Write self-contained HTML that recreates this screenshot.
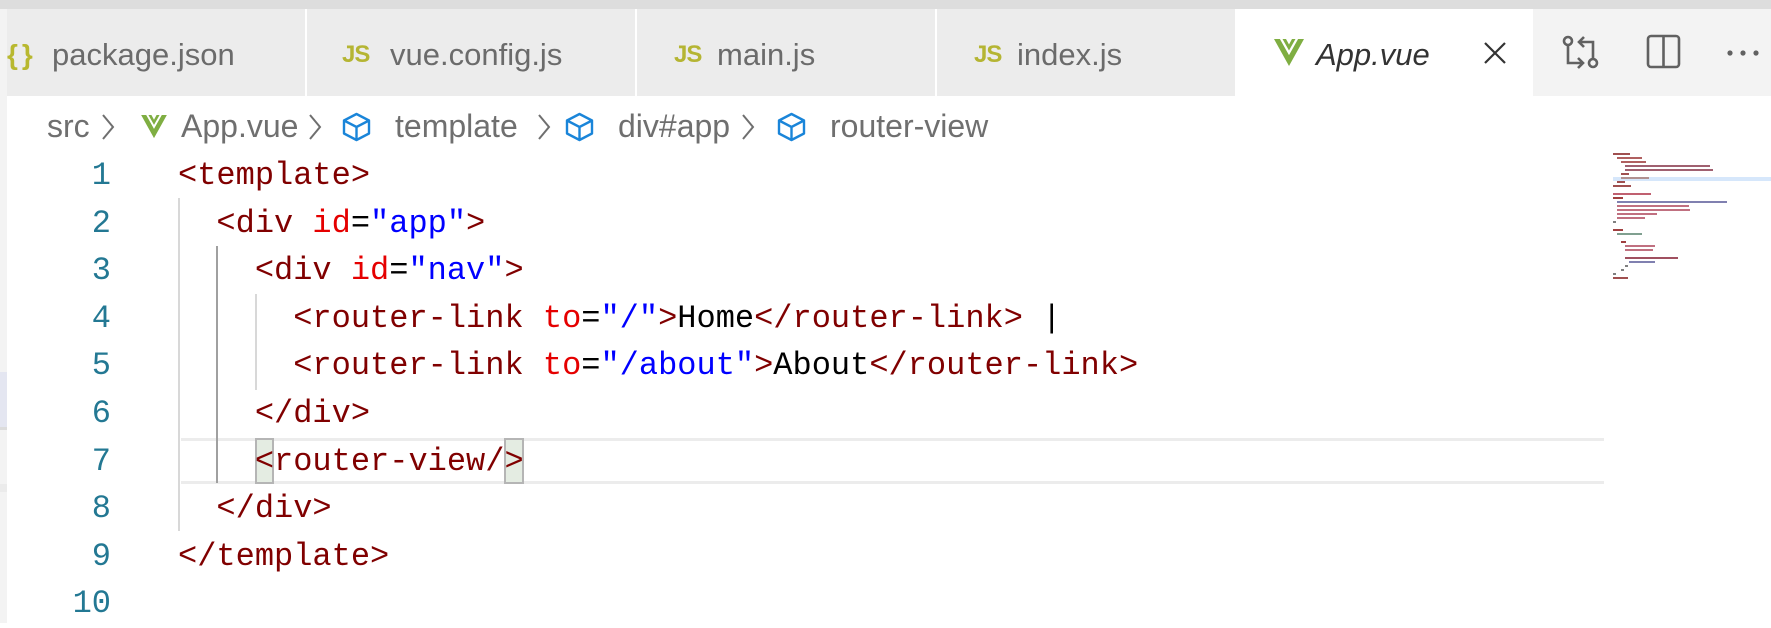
<!DOCTYPE html>
<html><head><meta charset="utf-8"><style>
*{margin:0;padding:0;box-sizing:border-box}
body{width:1771px;height:623px;overflow:hidden;background:#fff;position:relative;font-family:"Liberation Sans",sans-serif}
.abs{position:absolute}
.top{left:0;top:0;width:1771px;height:9px;background:#dddddd}
.tab{position:absolute;top:9px;height:87px;background:#ececec;color:#6b6b6b;font-size:31px;line-height:91px;white-space:nowrap}
.js{position:absolute;top:0;font-weight:bold;color:#b5b533;font-size:24px;letter-spacing:-1px}
.bc{position:absolute;top:96px;left:0;height:60px;width:1771px;font-size:32px;color:#6f6f6f;line-height:60px}
.bc span{position:absolute;top:0}
.ln{position:absolute;width:111px;text-align:right;color:#237893;font-family:"Liberation Mono",monospace;font-size:32px;line-height:47.6px}
.cl{position:absolute;left:178px;line-height:47.6px;font-family:"Liberation Mono",monospace;font-size:32px;white-space:pre;color:#000}
.t{color:#800000}.a{color:#e50000}.v{color:#0000ff}
.g{position:absolute;width:2px;background:#d8d8d8}
.mm div{position:absolute;height:2px}
</style></head><body>
<div class="abs top"></div>
<div class="abs" style="left:0;top:9px;width:7px;height:614px;background:#f3f3f3"></div>
<div class="abs" style="left:0;top:372px;width:7px;height:55px;background:#e4e6f1"></div>
<div class="abs" style="left:0;top:427px;width:7px;height:3px;background:#dcdcdc"></div>
<div class="abs" style="left:0;top:484px;width:7px;height:8px;background:#ebebeb"></div>

<div class="tab" style="left:7px;width:298px"><span style="position:absolute;left:0px;color:#b8b82f;font-weight:bold;font-size:28px;letter-spacing:4px">{}</span><span style="position:absolute;left:45px">package.json</span></div>
<div class="tab" style="left:307px;width:328px"><span class="js" style="left:35px">JS</span><span style="position:absolute;left:83px">vue.config.js</span></div>
<div class="tab" style="left:637px;width:298px"><span class="js" style="left:37px">JS</span><span style="position:absolute;left:80px">main.js</span></div>
<div class="tab" style="left:937px;width:298px"><span class="js" style="left:37px">JS</span><span style="position:absolute;left:80px">index.js</span></div>
<div class="tab" style="left:1237px;width:296px;background:#fff;color:#333"><svg style="position:absolute;left:37px;top:30px" width="30" height="28" viewBox="0 0 30 28"><path d="M0 0h6l9 16 9-16h6L15 27z" fill="#7fae42"/><path d="M6 0h5l4 7 4-7h5l-9 16z" fill="#fff"/><path d="M8.5 0h3.5l3 5.5 3-5.5h3.5l-6.5 11.5z" fill="#7fae42"/></svg><span style="position:absolute;left:79px;font-style:italic">App.vue</span><svg style="position:absolute;left:247px;top:33px" width="22" height="22" viewBox="0 0 22 22"><path d="M1 1L21 21M21 1L1 21" stroke="#333" stroke-width="2.2"/></svg></div>
<div class="abs" style="left:1533px;top:9px;width:238px;height:87px;background:#f3f3f3"></div>
<svg class="abs" style="left:1562px;top:34px" width="38" height="36" viewBox="0 0 38 36"><g fill="none" stroke="#616161" stroke-width="2.6"><circle cx="6" cy="7" r="4"/><circle cx="31" cy="29" r="4"/><path d="M6 11v18h14M16 24l5 5-5 5"/><path d="M31 25V8H17M22 3l-5 5 5 5"/></g></svg>
<svg class="abs" style="left:1646px;top:34px" width="35" height="35" viewBox="0 0 35 35"><rect x="2" y="2" width="31" height="31" rx="3" fill="none" stroke="#616161" stroke-width="2.6"/><path d="M17.5 2v31" stroke="#616161" stroke-width="2.6"/></svg>
<svg class="abs" style="left:1726px;top:48px" width="34" height="10"><circle cx="4" cy="5" r="2.6" fill="#616161"/><circle cx="17" cy="5" r="2.6" fill="#616161"/><circle cx="30" cy="5" r="2.6" fill="#616161"/></svg>

<div class="bc">
<span style="left:47px">src</span>
<svg style="position:absolute;left:101px;top:17px" width="14" height="28" viewBox="0 0 14 28"><path d="M2 2l10 12L2 26" fill="none" stroke="#6f6f6f" stroke-width="2"/></svg>
<svg style="position:absolute;left:141px;top:19px" width="26" height="24" viewBox="0 0 30 28"><path d="M0 0h6l9 16 9-16h6L15 27z" fill="#7fae42"/><path d="M6 0h5l4 7 4-7h5l-9 16z" fill="#fff"/><path d="M8.5 0h3.5l3 5.5 3-5.5h3.5l-6.5 11.5z" fill="#7fae42"/></svg>
<span style="left:181px">App.vue</span>
<svg style="position:absolute;left:308px;top:17px" width="14" height="28" viewBox="0 0 14 28"><path d="M2 2l10 12L2 26" fill="none" stroke="#6f6f6f" stroke-width="2"/></svg>
<svg style="position:absolute;left:341px;top:16px" width="31" height="30" viewBox="0 0 31 30"><g fill="none" stroke="#1a85d9" stroke-width="2.4" stroke-linejoin="round"><path d="M15.5 2L28 8.5v13L15.5 28 3 21.5v-13z"/><path d="M3 8.5l12.5 6.5L28 8.5M15.5 15v13"/></g></svg>
<span style="left:395px">template</span>
<svg style="position:absolute;left:537px;top:17px" width="14" height="28" viewBox="0 0 14 28"><path d="M2 2l10 12L2 26" fill="none" stroke="#6f6f6f" stroke-width="2"/></svg>
<svg style="position:absolute;left:564px;top:16px" width="31" height="30" viewBox="0 0 31 30"><g fill="none" stroke="#1a85d9" stroke-width="2.4" stroke-linejoin="round"><path d="M15.5 2L28 8.5v13L15.5 28 3 21.5v-13z"/><path d="M3 8.5l12.5 6.5L28 8.5M15.5 15v13"/></g></svg>
<span style="left:618px">div#app</span>
<svg style="position:absolute;left:741px;top:17px" width="14" height="28" viewBox="0 0 14 28"><path d="M2 2l10 12L2 26" fill="none" stroke="#6f6f6f" stroke-width="2"/></svg>
<svg style="position:absolute;left:776px;top:16px" width="31" height="30" viewBox="0 0 31 30"><g fill="none" stroke="#1a85d9" stroke-width="2.4" stroke-linejoin="round"><path d="M15.5 2L28 8.5v13L15.5 28 3 21.5v-13z"/><path d="M3 8.5l12.5 6.5L28 8.5M15.5 15v13"/></g></svg>
<span style="left:830px">router-view</span>
</div>

<!-- current line highlight -->
<div class="abs" style="left:181px;top:438px;width:1423px;height:46px;border-top:3px solid #ececec;border-bottom:3px solid #ececec"></div>
<!-- indent guides -->
<div class="g" style="left:178px;top:198px;height:333px"></div>
<div class="g" style="left:216px;top:246px;height:237px;background:#a0a0a0"></div>
<div class="g" style="left:255px;top:294px;height:96px"></div>
<!-- bracket boxes -->
<div class="abs" style="left:255px;top:438px;width:19px;height:46px;background:#e4ece2;border:2px solid #b5b5b5"></div>
<div class="abs" style="left:504px;top:438px;width:20px;height:46px;background:#e4ece2;border:2px solid #b5b5b5"></div>

<div class="ln" style="top:152px">1</div>
<div class="ln" style="top:199.6px">2</div>
<div class="ln" style="top:247.2px">3</div>
<div class="ln" style="top:294.8px">4</div>
<div class="ln" style="top:342.4px">5</div>
<div class="ln" style="top:390px">6</div>
<div class="ln" style="top:437.6px">7</div>
<div class="ln" style="top:485.2px">8</div>
<div class="ln" style="top:532.8px">9</div>
<div class="ln" style="top:580.4px">10</div>

<div class="cl" style="top:152px"><span class="t">&lt;template&gt;</span></div>
<div class="cl" style="top:199.6px">  <span class="t">&lt;div</span> <span class="a">id</span>=<span class="v">"app"</span><span class="t">&gt;</span></div>
<div class="cl" style="top:247.2px">    <span class="t">&lt;div</span> <span class="a">id</span>=<span class="v">"nav"</span><span class="t">&gt;</span></div>
<div class="cl" style="top:294.8px">      <span class="t">&lt;router-link</span> <span class="a">to</span>=<span class="v">"/"</span><span class="t">&gt;</span>Home<span class="t">&lt;/router-link&gt;</span> |</div>
<div class="cl" style="top:342.4px">      <span class="t">&lt;router-link</span> <span class="a">to</span>=<span class="v">"/about"</span><span class="t">&gt;</span>About<span class="t">&lt;/router-link&gt;</span></div>
<div class="cl" style="top:390px">    <span class="t">&lt;/div&gt;</span></div>
<div class="cl" style="top:437.6px">    <span class="t">&lt;router-view/&gt;</span></div>
<div class="cl" style="top:485.2px">  <span class="t">&lt;/div&gt;</span></div>
<div class="cl" style="top:532.8px"><span class="t">&lt;/template&gt;</span></div>

<!-- minimap -->
<div class="mm">
<div style="left:1613px;top:177px;width:158px;height:4px;background:#d6e7fb"></div>
<div style="left:1613px;top:153px;width:17px;background:#a05050"></div>
<div style="left:1617px;top:157px;width:25px;background:#b06060"></div>
<div style="left:1621px;top:161px;width:25px;background:#b06060"></div>
<div style="left:1625px;top:165px;width:85px;background:#a06070"></div>
<div style="left:1625px;top:169px;width:88px;background:#a06070"></div>
<div style="left:1621px;top:173px;width:8px;background:#a05050"></div>
<div style="left:1621px;top:177px;width:28px;background:#b09090"></div>
<div style="left:1617px;top:181px;width:8px;background:#a05050"></div>
<div style="left:1613px;top:185px;width:18px;background:#a05050"></div>
<div style="left:1613px;top:193px;width:38px;background:#c06070"></div>
<div style="left:1613px;top:197px;width:10px;background:#a04040"></div>
<div style="left:1617px;top:201px;width:110px;background:#8080b0"></div>
<div style="left:1617px;top:205px;width:72px;background:#c07080"></div>
<div style="left:1617px;top:209px;width:73px;background:#c07080"></div>
<div style="left:1617px;top:213px;width:40px;background:#c07080"></div>
<div style="left:1617px;top:217px;width:28px;background:#c07080"></div>
<div style="left:1613px;top:221px;width:3px;background:#808080"></div>
<div style="left:1613px;top:229px;width:10px;background:#a04040"></div>
<div style="left:1617px;top:233px;width:25px;background:#80a090"></div>
<div style="left:1621px;top:241px;width:5px;background:#a04040"></div>
<div style="left:1625px;top:245px;width:30px;background:#c07080"></div>
<div style="left:1625px;top:249px;width:28px;background:#c07080"></div>
<div style="left:1625px;top:257px;width:53px;background:#a05060"></div>
<div style="left:1629px;top:261px;width:26px;background:#8080b0"></div>
<div style="left:1625px;top:265px;width:3px;background:#808080"></div>
<div style="left:1621px;top:269px;width:3px;background:#808080"></div>
<div style="left:1613px;top:273px;width:3px;background:#808080"></div>
<div style="left:1613px;top:277px;width:15px;background:#a05050"></div>
</div>
</body></html>
